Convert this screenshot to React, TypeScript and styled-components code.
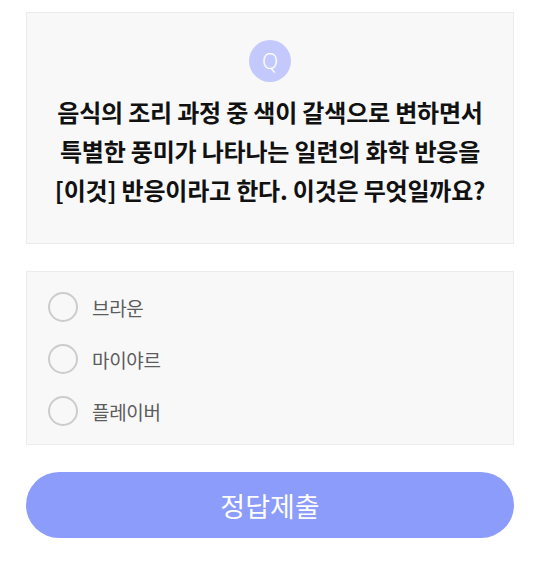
import React, { useState } from "react";
import styled, { createGlobalStyle } from "styled-components";

const Global = createGlobalStyle`
  html, body { margin: 0; padding: 0; background: #ffffff; }
  body { font-family: "Noto Sans CJK KR", "Noto Sans", sans-serif; }
  * { box-sizing: border-box; }
`;

const Page = styled.div`
  width: 488px;
  margin: 12px 0 0 26px;
  display: flex;
  flex-direction: column;
`;

const QuestionCard = styled.section`
  height: 232px;
  background: #f8f8f8;
  border: 1px solid #ececec;
  display: flex;
  flex-direction: column;
  align-items: center;
  padding-top: 27px;
`;

const QBadge = styled.div`
  width: 42px;
  height: 42px;
  border-radius: 50%;
  background: #c3c9fc;
  color: #ffffff;
  font-family: "Noto Sans", sans-serif;
  font-weight: 300;
  font-size: 21px;
  display: flex;
  align-items: center;
  justify-content: center;
`;

const QuestionText = styled.p`
  margin: 10px 0 0;
  font-size: 24px;
  font-weight: 700;
  line-height: 39px;
  letter-spacing: -0.2px;
  color: #111111;
  text-align: center;
  white-space: nowrap;
`;

const OptionsCard = styled.section`
  margin-top: 27px;
  height: 174px;
  background: #f8f8f8;
  border: 1px solid #ececec;
  display: flex;
  flex-direction: column;
  padding: 20px 0 0 21px;
  gap: 22px;
`;

const OptionRow = styled.label`
  display: flex;
  align-items: center;
  gap: 14px;
  height: 30px;
  cursor: pointer;
`;

const Radio = styled.span<{ $checked: boolean }>`
  width: 30px;
  height: 30px;
  border-radius: 50%;
  border: 2px solid ${(p) => (p.$checked ? "#8c9cfb" : "#cccccc")};
  background: ${(p) => (p.$checked ? "#8c9cfb" : "transparent")};
  flex: none;
`;

const OptionText = styled.span`
  font-size: 19px;
  color: #5c5c5c;
  letter-spacing: -0.3px;
`;

const SubmitButton = styled.button`
  margin-top: 27px;
  height: 66px;
  border: none;
  border-radius: 33px;
  background: #8c9cfb;
  color: #ffffff;
  font-family: "Noto Sans CJK KR", sans-serif;
  font-size: 27px;
  cursor: pointer;
`;

const options = ["브라운", "마이야르", "플레이버"];

export default function App() {
  const [sel, setSel] = useState<number | null>(null);
  return (
    <>
      <Global />
      <Page>
        <QuestionCard>
          <QBadge>Q</QBadge>
          <QuestionText>
            음식의 조리 과정 중 색이 갈색으로 변하면서
            <br />
            특별한 풍미가 나타나는 일련의 화학 반응을
            <br />
            [이것] 반응이라고 한다. 이것은 무엇일까요?
          </QuestionText>
        </QuestionCard>
        <OptionsCard>
          {options.map((o, i) => (
            <OptionRow key={o} onClick={() => setSel(i)}>
              <Radio $checked={sel === i} />
              <OptionText>{o}</OptionText>
            </OptionRow>
          ))}
        </OptionsCard>
        <SubmitButton>정답제출</SubmitButton>
      </Page>
    </>
  );
}
